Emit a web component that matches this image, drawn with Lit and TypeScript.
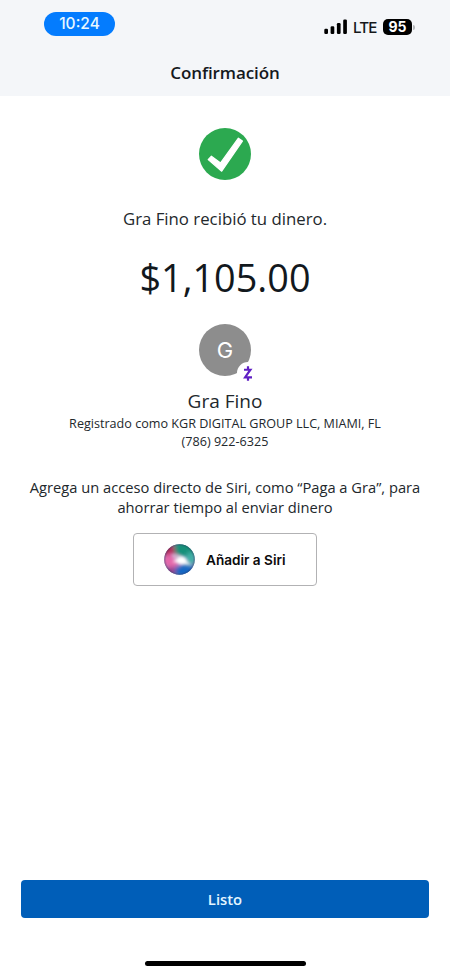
import { LitElement, html, css, svg } from "lit";
import { customElement } from "lit/decorators.js";

@customElement("status-bar")
class StatusBar extends LitElement {
  static styles = css`
    :host { display: flex; justify-content: space-between; height: 50px; padding: 12px 35px 0 44px; box-sizing: border-box; font-family: Inter, sans-serif; }
    .time { width: 71px; height: 24px; border-radius: 12px; background: #047cfe; color: #e9f8ff; font-size: 15.5px; line-height: 24px; font-weight: 500; text-align: center; }
    .right { display: flex; align-items: center; height: 30px; }
    .signal { width: 24px; height: 16px; display: block; }
    .lte { font-size: 15.2px; font-weight: 500; letter-spacing: -0.9px; margin-left: 5px; width: 23px; line-height: 20px; padding-top: 2px; color: #15181b; white-space: nowrap; }
    .battery { margin-left: 7px; width: 29px; height: 16px; border-radius: 5px; background: #000; color: #fff; font-size: 14px; font-weight: 700; line-height: 16px; text-align: center; }
    .cap { width: 2px; height: 5px; margin-left: 1px; border-radius: 0 2px 2px 0; background: #b5b8bb; }
  `;
  render() {
    return html`
      <div class="time">10:24</div>
      <div class="right">
        <svg class="signal" viewBox="0 0 24 16">
          <rect x="0.3" y="9.8" width="3.7" height="5.2" rx="1.2" />
          <rect x="6.6" y="7.2" width="3.7" height="7.8" rx="1.2" />
          <rect x="12.9" y="4" width="3.7" height="11" rx="1.2" />
          <rect x="19.2" y="0.6" width="3.7" height="14.4" rx="1.2" />
        </svg>
        <span class="lte">LTE</span>
        <span class="battery">95</span>
        <span class="cap"></span>
      </div>
    `;
  }
}

const zelle = svg`
  <g fill="none" stroke="#5f1fc4" stroke-width="2.2">
    <path d="M1 4.5H7.4L2 12.2H9" stroke-linejoin="miter" />
    <path d="M5 1V4.5M5 12V15.5" />
  </g>`;

@customElement("app-root")
class AppRoot extends LitElement {
  static styles = css`
    :host { display: flex; flex-direction: column; height: 975px; background: #fff; color: #22282c; font-family: "Open Sans", sans-serif; text-align: center; overflow: hidden; }
    .header { height: 96px; background: #f4f6f9; }
    .title { font-size: 17px; font-weight: 600; line-height: 24px; padding-top: 11px; color: #15191d; letter-spacing: -0.1px; }
    .main { flex: 1; display: flex; flex-direction: column; align-items: center; padding-top: 32px; white-space: nowrap; }
    .check { width: 52px; height: 52px; display: block; }
    .received { font-size: 16.8px; line-height: 24px; margin-top: 27px; }
    .amount { font-size: 37.8px; line-height: 48px; margin-top: 23px; color: #12181d; }
    .avatar { position: relative; width: 52px; height: 52px; margin-top: 22px; border-radius: 50%; background: #8d8d8d; color: #fff; font: 22px/53px Inter, sans-serif; }
    .badge { position: absolute; left: 38px; top: 38px; width: 22px; height: 22px; border-radius: 50%; background: #fff; display: flex; align-items: center; justify-content: center; }
    .badge svg { width: 10px; height: 17px; display: block; }
    .name { font-size: 19px; line-height: 26px; margin-top: 12px; }
    .detail { font-size: 12.6px; line-height: 18px; }
    .name + .detail { margin-top: 1px; }
    .hint { font-size: 14.7px; line-height: 20px; margin-top: 25.5px; }
    .siri { display: flex; align-items: center; width: 184px; height: 53px; margin-top: 16.5px; padding-left: 30px; gap: 11px; box-sizing: border-box; border: 1px solid #b2b2b4; border-radius: 4px; background: #fff; color: #0b0b0c; font: 600 13.6px/20px Inter, sans-serif; }
    .orb { width: 31px; height: 31px; display: block; }
    .footer { height: 95px; padding: 0 21px; display: flex; flex-direction: column; align-items: center; }
    .done { width: 408px; height: 38px; border: 0; border-radius: 4px; background: #005eb8; color: #e4f6ff; font: 600 14.8px/38px "Open Sans", sans-serif; padding: 0; }
    .home { width: 161px; height: 5px; margin-top: 43px; border-radius: 3px; background: #000; }
  `;
  render() {
    return html`
      <div class="header">
        <status-bar></status-bar>
        <div class="title">Confirmación</div>
      </div>
      <div class="main">
        <svg class="check" viewBox="0 0 52 52">
          <circle cx="26" cy="26" r="26" fill="#2ca950" />
          <path d="M39.4 10.2L43.4 13.1L22.7 43.2L9.2 31.6L12.4 28.2L21.6 34.9Z" fill="#fff" stroke="#fff" stroke-width="1.2" stroke-linejoin="round" />
        </svg>
        <div class="received">Gra Fino recibió tu dinero.</div>
        <div class="amount">$1,105.00</div>
        <div class="avatar">G
          <span class="badge"><svg viewBox="0 0 10 16.5">${zelle}</svg></span>
        </div>
        <div class="name">Gra Fino</div>
        <div class="detail">Registrado como KGR DIGITAL GROUP LLC, MIAMI, FL</div>
        <div class="detail">(786) 922-6325</div>
        <div class="hint">Agrega un acceso directo de Siri, como “Paga a Gra”, para<br />ahorrar tiempo al enviar dinero</div>
        <button class="siri">
          <svg class="orb" viewBox="0 0 31 31">
            <defs>
              <clipPath id="c"><circle cx="15.5" cy="15.5" r="15.3" /></clipPath>
              <filter id="b" x="-50%" y="-50%" width="200%" height="200%"><feGaussianBlur stdDeviation="2.2" /></filter>
              <filter id="s" x="-50%" y="-50%" width="200%" height="200%"><feGaussianBlur stdDeviation="1.5" /></filter>
              <radialGradient id="e"><stop offset="0.84" stop-color="#28264c" stop-opacity="0" /><stop offset="1" stop-color="#28264c" stop-opacity="0.4" /></radialGradient>
            </defs>
            <g clip-path="url(#c)">
              <rect width="31" height="31" fill="#7f93bd" />
              <g filter="url(#b)">
                <ellipse cx="21" cy="5" rx="12" ry="8" fill="#189079" />
                <ellipse cx="27" cy="14" rx="5" ry="6" fill="#3fb0a6" />
                <ellipse cx="5" cy="7" rx="6" ry="7" fill="#b32a5c" />
                <ellipse cx="7" cy="17" rx="9" ry="7" fill="#e567ab" />
                <ellipse cx="20" cy="27" rx="11" ry="6" fill="#1268c4" />
                <ellipse cx="7" cy="27" rx="5" ry="4" fill="#93408f" />
              </g>
              <g filter="url(#s)">
                <path d="M7 10Q19 8 27 20Q20 22 14 19Q9 16 7 10Z" fill="#d5e5ef" opacity="0.5" />
                <ellipse cx="17.5" cy="16.5" rx="5" ry="4" fill="#fff" />
                <path d="M8 18L17 14L27 21L17 19Z" fill="#fff" />
              </g>
              <circle cx="15.5" cy="15.5" r="15.5" fill="url(#e)" />
            </g>
          </svg>
          <span>Añadir a Siri</span>
        </button>
      </div>
      <div class="footer">
        <button class="done">Listo</button>
        <div class="home"></div>
      </div>
    `;
  }
}
